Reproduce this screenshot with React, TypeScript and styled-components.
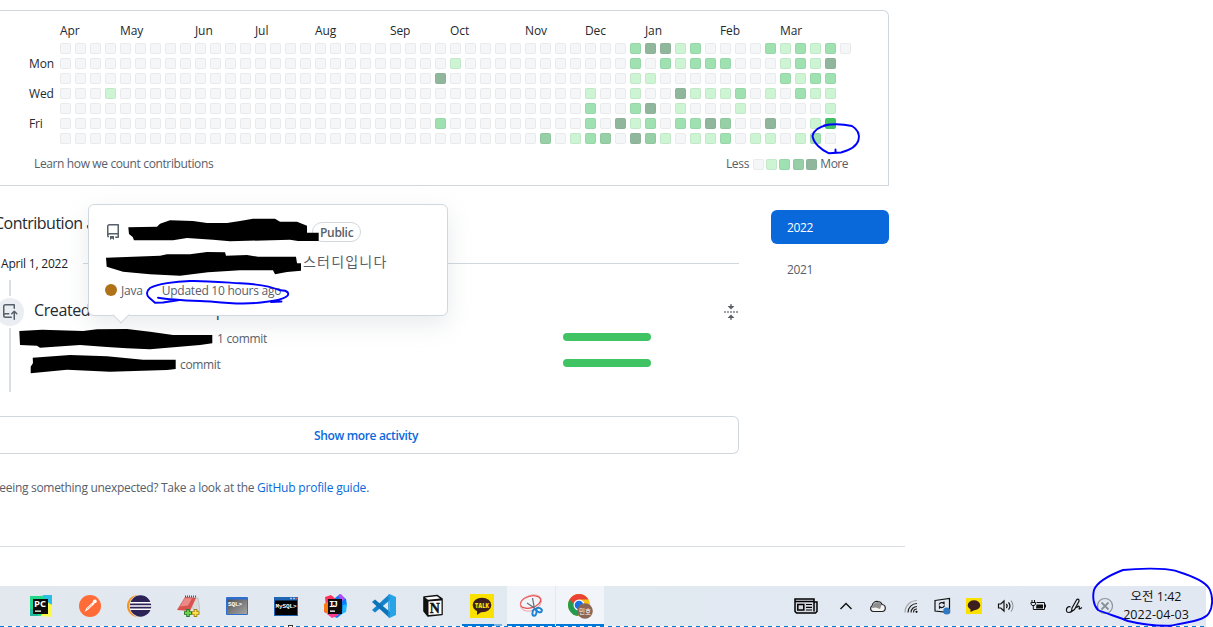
import React from "react";
import styled, { createGlobalStyle } from "styled-components";

const GlobalStyle = createGlobalStyle`
  * { box-sizing: border-box; }
  body { margin: 0; background: #fff; overflow: hidden; }
  #root { font-family: "Open Sans", "Noto Sans CJK KR", sans-serif; }
`;

const Page = styled.div`
  position: relative;
  width: 1213px;
  height: 627px;
  overflow: hidden;
  display: flex;
  flex-direction: column;
  background: #fff;
`;

const Text = styled.span<{ $size?: number; $color?: string; $weight?: number; $track?: number; $line?: number }>`
  display: block;
  white-space: pre;
  font-size: ${(p) => p.$size ?? 12}px;
  line-height: ${(p) => p.$line ?? 18}px;
  color: ${(p) => p.$color ?? "#57606a"};
  font-weight: ${(p) => p.$weight ?? 400};
  letter-spacing: ${(p) => p.$track ?? 0}px;
`;

const CalendarCard = styled.section`
  width: 889px;
  height: 176px;
  margin-top: 10px;
  flex: none;
  border: 1px solid #d0d7de;
  border-left: 0;
  border-radius: 0 6px 0 0;
  padding: 11px 39px 0 29px;
`;

const Months = styled.div`
  display: grid;
  grid-template-columns: repeat(53, 15px);
  height: 21px;
  margin-left: 31px;
`;

const Month = styled(Text)<{ $col: number }>`
  grid-row: 1;
  grid-column: ${(p) => p.$col + 1};
`;

const CalendarBody = styled.div`
  display: flex;
`;

const Weekdays = styled.div`
  width: 31px;
  flex: none;
  padding-top: 12px;
  display: flex;
  flex-direction: column;
  gap: 12px;
`;

const Weeks = styled.div`
  display: grid;
  flex: none;
  grid-template-rows: repeat(7, 11px);
  grid-auto-columns: 11px;
  grid-auto-flow: column;
  gap: 4px;
`;

const levelColors = ["#f5f6f8", "#cdf4d3", "#9fe1b1", "#97d0a6", "#90b69c", "#40c463"];

const Day = styled.i<{ $level: number }>`
  width: 11px;
  height: 11px;
  flex: none;
  border-radius: 2px;
  background: ${(p) => levelColors[p.$level]};
  box-shadow: inset 0 0 0 1px rgba(27, 31, 35, ${(p) => (p.$level > 3 ? 0.03 : 0.055)});
`;

const CalendarFooter = styled.div`
  display: flex;
  justify-content: space-between;
  align-items: center;
  margin: 11px 1px 0 5px;
`;

const Legend = styled.div`
  display: flex;
  align-items: center;
  gap: 3.5px;
`;

const Swatches = styled.div`
  display: flex;
  gap: 2.3px;
`;

const Columns = styled.div`
  display: flex;
  gap: 32px;
  height: 268px;
  flex: none;
`;

const Feed = styled.main`
  width: 739px;
  display: flex;
  flex-direction: column;
`;

const Heading = styled.div`
  height: 54px;
  padding-top: 25px;
  margin-left: -6px;
`;

const DateRow = styled.div`
  display: flex;
  align-items: center;
  gap: 15px;
  height: 47px;
  padding-left: 1px;
  &::after {
    content: "";
    flex: 1;
    height: 1px;
    background: #d0d7de;
  }
`;

const Activity = styled.div`
  display: flex;
  height: 112px;
  margin-top: -7px;
`;

const Rail = styled.div`
  width: 24px;
  display: flex;
  flex-direction: column;
`;

const RailLine = styled.div<{ $height: number }>`
  width: 2px;
  height: ${(p) => p.$height}px;
  margin-left: 9px;
  background: #d8dee4;
`;

const Badge = styled.div`
  width: 28px;
  height: 28px;
  margin: 2px 0 2px -4px;
  border-radius: 50%;
  background: #eaeef2;
  display: grid;
  place-items: center;
`;

const ActivityBody = styled.div`
  flex: 1;
  padding-top: 18px;
`;

const ActivityTitle = styled.div`
  display: flex;
  justify-content: space-between;
  align-items: center;
  height: 28px;
  padding-left: 10px;
  & > span { margin-bottom: 4px; }
`;

const CommitRow = styled.div<{ $indent: number }>`
  display: flex;
  align-items: center;
  justify-content: space-between;
  height: 26px;
  padding-left: ${(p) => p.$indent}px;
  padding-right: 88px;
`;

const CommitBar = styled.div`
  width: 88px;
  height: 8px;
  margin-bottom: 4px;
  border-radius: 4px;
  background: #40c463;
`;

const ShowMore = styled.button`
  height: 38px;
  margin-top: 24px;
  border: 1px solid #d0d7de;
  border-left: 0;
  border-radius: 0 6px 6px 0;
  background: #fff;
  font-family: inherit;
  padding: 2px 6px 0 0;
  display: flex;
  align-items: center;
  justify-content: center;
`;

const Years = styled.nav`
  width: 118px;
  padding-top: 24px;
  display: flex;
  flex-direction: column;
  gap: 8px;
`;

const Year = styled.div<{ $active?: boolean }>`
  height: 34px;
  padding: 9px 16px 7px;
  border-radius: 6px;
  background: ${(p) => (p.$active ? "#0969da" : "transparent")};
`;

const Hint = styled.div`
  display: flex;
  margin: 25px 0 0 -7px;
`;

const Rule = styled.hr`
  width: 905px;
  height: 1px;
  margin: 49px 0 39px;
  border: 0;
  flex: none;
  background: #d8dee4;
`;

const HoverCard = styled.aside`
  position: absolute;
  left: 88px;
  top: 204px;
  width: 360px;
  height: 112px;
  border: 1px solid #d0d7de;
  border-radius: 6px;
  background: #fff;
  box-shadow: 0 8px 24px rgba(140, 149, 159, 0.2);
  padding: 17px 16px;
  &::after {
    content: "";
    position: absolute;
    left: 26px;
    bottom: -6px;
    width: 11px;
    height: 11px;
    background: #fff;
    border: solid #d0d7de;
    border-width: 0 1px 1px 0;
    transform: rotate(45deg);
  }
`;

const RepoLine = styled.div`
  display: flex;
  align-items: center;
  height: 20px;
`;

const Visibility = styled.div`
  margin-left: 191px;
  width: 49px;
  height: 20px;
  border: 1px solid #d0d7de;
  border-radius: 10px;
  display: flex;
  align-items: center;
  padding: 2px 0 0 7px;
`;

const Description = styled.div`
  height: 20px;
  margin: 10px 0 9px;
  padding-left: 198px;
`;

const MetaLine = styled.div`
  display: flex;
  align-items: center;
  height: 18px;
  & > span { padding-top: 2px; }
`;

const LanguageDot = styled.i`
  width: 12px;
  height: 12px;
  margin-right: 4px;
  border-radius: 50%;
  background: #b07219;
`;

const Updated = styled(Text)`
  margin-left: 19px;
`;

const Taskbar = styled.footer`
  position: relative;
  width: 1206px;
  height: 41px;
  flex: none;
  display: flex;
  background: linear-gradient(90deg, #e3e8ef, #e1e9f1 50%, #e2e8f2);
  padding-left: 17px;
`;

const Apps = styled.div`
  display: flex;
  gap: 1px;
  width: 769px;
`;

const AppSlot = styled.div<{ $active?: boolean; $running?: boolean }>`
  position: relative;
  width: 48px;
  height: 40px;
  display: grid;
  place-items: center;
  background: ${(p) => (p.$active ? "#f1f5fa" : "transparent")};
  &::after {
    content: "";
    position: absolute;
    bottom: 0;
    left: ${(p) => (p.$active ? 0 : 4)}px;
    right: ${(p) => (p.$active ? 0 : 4)}px;
    height: 2px;
    background: ${(p) =>
      p.$active ? "#0078d7" : p.$running ? "linear-gradient(90deg,#0078d7 32px,#76b4e8 32px)" : "transparent"};
  }
`;

const Tray = styled.div`
  display: flex;
`;

const TraySlot = styled.div<{ $w: number }>`
  width: ${(p) => p.$w}px;
  height: 40px;
  display: flex;
  align-items: center;
  justify-content: center;
  & > svg { flex: none; }
`;

const Clock = styled.div`
  width: 64px;
  padding-top: 2px;
  display: flex;
  flex-direction: column;
  align-items: center;
`;

const Selection = styled.div`
  position: absolute;
  left: 0;
  bottom: 0;
  width: 1204px;
  height: 1px;
  background: repeating-linear-gradient(90deg, #0078d7 0 4px, #fff 4px 8px);
`;

const SelectionHandle = styled.i`
  position: absolute;
  left: 288px;
  bottom: -3px;
  width: 5px;
  height: 5px;
  border: 1px solid #333;
  background: #fff;
`;

const Ink = styled.svg`
  position: absolute;
  inset: 0;
  pointer-events: none;
`;

const monthLabels: [string, number][] = [
  ["Apr", 0], ["May", 4], ["Jun", 9], ["Jul", 13], ["Aug", 17], ["Sep", 22],
  ["Oct", 26], ["Nov", 31], ["Dec", 35], ["Jan", 39], ["Feb", 44], ["Mar", 48],
];

const empty = (n: number) => "0".repeat(n);
const rows = [
  empty(38) + "244120000212120",
  empty(26) + "1" + empty(11) + "20212220001214",
  empty(25) + "4" + empty(12) + "11000000002122",
  "0001" + empty(31) + "100" + "10041112010211",
  empty(35) + "200" + "24010001000001",
  empty(25) + "2" + empty(9) + "204" + "12022430040015",
  empty(32) + "301230" + "43101120110120",
];

const days: { key: string; level: number }[] = [];
for (let col = 0; col < 53; col++) {
  for (let row = 0; row < 7; row++) {
    if (col === 52 && row > 0) break;
    days.push({ key: `${col}-${row}`, level: Number(rows[row][col]) });
  }
}

const octicons = {
  repo: "M2 2.5A2.5 2.5 0 014.5 0h8.75a.75.75 0 01.75.75v12.5a.75.75 0 01-.75.75h-2.5a.75.75 0 110-1.5h1.75v-2h-8a1 1 0 00-.714 1.7.75.75 0 01-1.072 1.05A2.495 2.495 0 012 11.5v-9zm10.5-1V9h-8c-.356 0-.694.074-1 .208V2.5a1 1 0 011-1h8zM5 12.25v3.25a.25.25 0 00.4.2l1.45-1.087a.25.25 0 01.3 0L8.6 15.7a.25.25 0 00.4-.2v-3.25a.25.25 0 00-.25-.25h-3.5a.25.25 0 00-.25.25z",
  push: "M1 2.5A2.5 2.5 0 013.5 0h8.75a.75.75 0 01.75.75v3.5a.75.75 0 01-1.5 0V1.5h-8a1 1 0 00-1 1v6.708A2.492 2.492 0 013.5 9h3.25a.75.75 0 010 1.5H3.5a1 1 0 100 2h5.75a.75.75 0 010 1.5H3.5A2.5 2.5 0 011 11.5v-9zm13.23 7.79a.75.75 0 001.06-1.06l-2.505-2.505a.75.75 0 00-1.06 0L9.22 9.229a.75.75 0 001.06 1.061l1.225-1.224v6.184a.75.75 0 001.5 0V9.066l1.224 1.224z",
  fold: "M10.896 2H8.75V.75a.75.75 0 00-1.5 0V2H5.104a.25.25 0 00-.177.427l2.896 2.896a.25.25 0 00.354 0l2.896-2.896A.25.25 0 0010.896 2zM8.75 15.25a.75.75 0 01-1.5 0V14H5.104a.25.25 0 01-.177-.427l2.896-2.896a.25.25 0 01.354 0l2.896 2.896a.25.25 0 01-.177.427H8.75v1.25zm-6.5-6.5a.75.75 0 000-1.5h-.5a.75.75 0 000 1.5h.5zM6 8a.75.75 0 01-.75.75h-.5a.75.75 0 010-1.5h.5A.75.75 0 016 8zm2.25.75a.75.75 0 000-1.5h-.5a.75.75 0 000 1.5h.5zM12 8a.75.75 0 01-.75.75h-.5a.75.75 0 010-1.5h.5A.75.75 0 0112 8zm2.25.75a.75.75 0 000-1.5h-.5a.75.75 0 000 1.5h.5z",
};

const Octicon = ({ name }: { name: keyof typeof octicons }) => (
  <svg width="16" height="16" viewBox="0 0 16 16" fill="#57606a"><path fillRule="evenodd" d={octicons[name]} /></svg>
);

const PyCharm = () => (
  <svg width="24" height="24" viewBox="0 0 24 24">
    <path d="M1 2h9l13-1v8L12 22H1z" fill="#21d789" />
    <path d="M14 1h9v10l-6-4z" fill="#2bbde8" />
    <path d="M18 8l5 3v12l-11-1z" fill="#fcf84a" />
    <path d="M1 15h8v7H1z" fill="#22b8a0" />
    <rect x="4" y="5" width="15" height="15" fill="#0b0b0b" />
    <text x="5" y="13" fontSize="9" fontWeight="700" fill="#fff" textLength="12" lengthAdjust="spacingAndGlyphs">PC</text>
    <rect x="6" y="16.5" width="6" height="1.3" fill="#fff" />
  </svg>
);

const Postman = () => (
  <svg width="24" height="24" viewBox="0 0 24 24">
    <circle cx="12" cy="12" r="11" fill="#ff6c37" />
    <path d="M6.500 18l2-4 6.500-6 1.600 1.800L10 15.700z" fill="#fff" />
    <circle cx="16.800" cy="7.300" r="1.900" fill="#fff" />
    <path d="M9 15l5-4.500" stroke="#ff9a74" strokeWidth=".7" />
  </svg>
);

const Eclipse = () => (
  <svg width="26" height="24" viewBox="0 0 26 24">
    <circle cx="12" cy="12" r="11" fill="#f7941e" />
    <circle cx="14.5" cy="12" r="11.3" fill="#e3e8ef" />
    <circle cx="14.5" cy="12" r="10.7" fill="#2c2255" />
    <path d="M4 8.800h21M3.500 12h22M4 15.200h21" stroke="#fff" strokeWidth="1.5" />
  </svg>
);

const NotepadPlus = () => (
  <svg width="24" height="24" viewBox="0 0 24 24">
    <path d="M10 3l12 1 2 12-5 2z" fill="#d9dadb" stroke="#999" strokeWidth=".4" />
    <path d="M9 3l11 1-6 13L1 16z" fill="#d9534f" />
    <path d="M9 4l7 .5-4 7-8 1z" fill="#f3a19b" opacity=".7" />
    <path d="M9 2.500h11" stroke="#555" strokeWidth="2" strokeDasharray="1 1" />
    <path d="M12 15v8M8 19h8" stroke="#267a2b" strokeWidth="3.6" />
    <path d="M12 16v6M9 19h6" stroke="#6fd04c" strokeWidth="1.8" />
    <path d="M19.500 15v8M16 19h7.500" stroke="#a58412" strokeWidth="3.6" />
    <path d="M19.500 16v6M16.500 19h6" stroke="#ffe14a" strokeWidth="1.8" />
  </svg>
);

const SqlConsole = () => (
  <svg width="24" height="24" viewBox="0 0 24 24">
    <defs><linearGradient id="sqlBody" x2="1" y2="1"><stop stopColor="#535353" /><stop offset="1" stopColor="#a5a5a5" /></linearGradient></defs>
    <rect x="1" y="3" width="22" height="18" rx="1" fill="#2d6fd0" />
    <rect x="2" y="5.5" width="20" height="14.5" fill="url(#sqlBody)" />
    <text x="3" y="11.5" fontSize="6" fontFamily="Liberation Mono" fontWeight="700" fill="#fff" textLength="14">SQL&gt;</text>
  </svg>
);

const MySql = () => (
  <svg width="24" height="24" viewBox="0 0 24 24">
    <rect x="0" y="3" width="24" height="19" fill="#2166b4" />
    <path d="M16 4.500h2M19 4.500h2" stroke="#9cc6f4" strokeWidth="1.5" />
    <path d="M21.500 4.500h2" stroke="#e25544" strokeWidth="1.5" />
    <rect x="1" y="6.5" width="22" height="14.5" fill="#000" />
    <text x="1.5" y="13.5" fontSize="6" fontFamily="Liberation Mono" fontWeight="700" fill="#fff" textLength="21">MySQL&gt;</text>
  </svg>
);

const IntelliJ = () => (
  <svg width="24" height="24" viewBox="0 0 24 24">
    <path d="M2 3l6-2 6 5-4 16-9-4 2-6z" fill="#fe315d" />
    <path d="M1 10l5-3v14l-5-4z" fill="#f97a12" />
    <path d="M12 4l5-4 6 5 1 6-5 9-5 4-5-2z" fill="#087cfa" />
    <path d="M15 2l3-2 4 5-3 2z" fill="#b74af7" />
    <path d="M4 20l6-2 6 3-7 3z" fill="#fe3c8d" />
    <path d="M20 11l4-1-1 8-4 2z" fill="#20b8f5" />
    <rect x="5" y="5" width="14" height="15" fill="#110b0b" />
    <text x="6" y="13" fontSize="9" fontFamily="Liberation Mono" fontWeight="700" fill="#fff" textLength="9">IJ</text>
    <rect x="7" y="16.5" width="5" height="1.3" fill="#fff" />
  </svg>
);

const VsCode = () => (
  <svg width="24" height="24" viewBox="0 0 24 24">
    <path d="M17.500 0L24 3v18l-6.500 3z" fill="#28a3e8" />
    <path d="M17.500 0L18 6 3 18.500 0 16z" fill="#1682cc" />
    <path d="M0 8l3-2.500L18 18l-.5 6z" fill="#0c73b8" />
    <path d="M17.500 0v24l-1.300-.8V1z" fill="#2196dc" />
  </svg>
);

const Notion = () => (
  <svg width="24" height="24" viewBox="0 0 24 24">
    <path d="M3 3l13-1.500 5 3.500v15.500l-14 1.500-4-5z" fill="#111" stroke="#111" strokeLinejoin="round" strokeWidth="1.6" />
    <path d="M4 3.500l12-1.300 3 2.300-12 1.200z" fill="#fff" />
    <path d="M7.500 7.500l13-1v13.500l-13 1z" fill="#fff" />
    <text x="8.700" y="19" fontSize="14" fontFamily="Liberation Serif" fontWeight="700" fill="#111" stroke="#111" strokeWidth=".4">N</text>
  </svg>
);

const KakaoTalk = () => (
  <svg width="24" height="24" viewBox="0 0 24 24">
    <rect width="24" height="24" fill="#fae100" />
    <ellipse cx="12" cy="11" rx="9.3" ry="7.3" fill="#3b1e1e" />
    <path d="M7 16v5l5-3.500z" fill="#3b1e1e" />
    <text x="5" y="13.5" fontSize="6.5" fontWeight="800" fill="#fae100" textLength="14" lengthAdjust="spacingAndGlyphs">TALK</text>
  </svg>
);

const SnippingTool = () => (
  <svg width="26" height="24" viewBox="0 0 26 24" fill="none">
    <ellipse cx="12.5" cy="8" rx="10.5" ry="5.8" transform="rotate(-16 12.5 8)" stroke="#e84a4a" strokeWidth="1.3" />
    <ellipse cx="13" cy="9" rx="11" ry="7.5" transform="rotate(-24 13 9)" stroke="#f08b8b" strokeWidth=".7" />
    <path d="M14.500 4l2 11M9 9l9 6" stroke="#67727c" strokeWidth="1.3" />
    <ellipse cx="16.5" cy="18.5" rx="2" ry="3.3" transform="rotate(12 16.5 18.5)" stroke="#1f83d2" strokeWidth="1.9" />
    <ellipse cx="21" cy="16" rx="3" ry="2" transform="rotate(25 21 16)" stroke="#1f83d2" strokeWidth="1.9" />
  </svg>
);

const Chrome = () => (
  <svg width="26" height="26" viewBox="0 0 26 26">
    <circle cx="12" cy="12" r="11" fill="#fbc116" />
    <path d="M2.500 6.500A11 11 0 0011 23l4.500-8L12 12z" fill="#229b52" />
    <path d="M2.500 6.500A11 11 0 0121.500 6.500H12L8 12z" fill="#ea4335" />
    <circle cx="12" cy="12" r="5.5" fill="#fff" />
    <circle cx="12" cy="12" r="4.3" fill="#1a6fe8" />
    <circle cx="18" cy="18" r="7.8" fill="#8a6657" />
    <text x="12" y="20.8" fontSize="7" fill="#fff" textLength="12" lengthAdjust="spacingAndGlyphs">민호</text>
  </svg>
);

const News = () => (
  <svg width="24" height="16" viewBox="0 0 24 16" fill="none" stroke="#000" strokeWidth="1.5">
    <path d="M20 4h3v9.500l-1.500 1.500H2.500L1 13.500V1h19v12.500" fill="#d5d9df" />
    <path d="M1 3.500h19" /><rect x="3.800" y="6.500" width="6" height="5.5" />
    <path d="M12 6.500h6M12 9.300h6M12 12h6" strokeWidth="1.2" />
  </svg>
);
const ChevronUp = () => (
  <svg width="14" height="8" viewBox="0 0 14 8" fill="none" stroke="#111" strokeWidth="1.4"><path d="M1.500 7L7 1.500 12.500 7" /></svg>
);
const Cloud = () => (
  <svg width="18" height="13" viewBox="0 0 18 13">
    <path d="M4 11.500A3 3 0 013 6C3.500 3 6 1 9 1.500c2.500.2 3.500 1.500 4 3 2 .2 3.300 1.500 3.300 3.500S15 11.500 13 11.500z" fill="#f4f4f4" stroke="#222" strokeWidth="1.2" />
    <path d="M3 8C3.500 4 6.500 2 9 2c2 .3 3 1.500 3.500 3L11 9 7 7.500z" fill="#8f8f8f" />
  </svg>
);
const Wifi = () => (
  <svg width="14" height="14" viewBox="0 0 14 14" fill="none" stroke="#222" strokeWidth="1.2">
    <path d="M1 13.500A12 12 0 0113 1.500" stroke="#a5a9ae" />
    <path d="M4 13.500A9 9 0 0113 4.500M7 13.500A6 6 0 0113 7.500M9.500 13.500A3.500 3.500 0 0113 10" />
    <circle cx="12.5" cy="12.8" r="1.1" fill="#111" stroke="none" />
  </svg>
);
const DisplaySync = () => (
  <svg width="18" height="18" viewBox="0 0 18 18" fill="none" stroke="#111" strokeWidth="1.2">
    <path d="M2 3.500L16.500 1.500v14L2 14z" />
    <path d="M6 7.500C7 5.300 9.500 5 11 6.500V4.500M11.500 8.500C10.500 11 8 11 6.500 9.500V11.800" />
    <circle cx="13.7" cy="14" r="3.5" fill="#2f78c4" stroke="none" />
  </svg>
);
const KakaoTray = () => (
  <svg width="16" height="16" viewBox="0 0 16 16">
    <rect width="16" height="16" fill="#fae100" />
    <ellipse cx="8" cy="7.2" rx="6.2" ry="5" fill="#3b1e1e" /><path d="M4.500 10v4l4-2z" fill="#3b1e1e" />
  </svg>
);
const Speaker = () => (
  <svg width="18" height="14" viewBox="0 0 18 14" fill="none" stroke="#111" strokeWidth="1.2">
    <path d="M2.500 5h2.300L8 2v10L4.800 9H2.500z" />
    <path d="M10.300 5a3 3 0 010 4M12.500 3.300a6 6 0 010 7.400" /><path d="M15 1.500a9 9 0 010 11" stroke="#8d9298" />
  </svg>
);
const Battery = () => (
  <svg width="17" height="12" viewBox="0 0 17 12" fill="none" stroke="#111">
    <path d="M6.500 2.500h8v7h-10M15.500 4.500v3" />
    <path d="M6.500 4.500h6.500v4h-7z" fill="#111" stroke="none" />
    <path d="M2 0v2M4.500 0v2" /><path d="M1 2.500h4.500v1.500L4.500 5.500H2L1 4z" fill="#e2e8f2" /><path d="M3.300 6v3.500h2" />
  </svg>
);
const Pen = () => (
  <svg width="18" height="16" viewBox="0 0 18 16" fill="none" stroke="#111" strokeWidth="1.2">
    <path d="M7 10l4.500-8c1.300-1.600 3-.5 2.500 1.300L9.500 11.500 6.500 13.500z" />
    <path d="M5.500 8.800C2.500 8.300 1 10.500 1.500 12.800s3.500 2.200 5.500.2M11.500 10c.8-1.500 2.300-2.300 2.800-1.300s-1 2.500.5 2.300L17 9.500" />
  </svg>
);
const CloseCircle = () => (
  <svg width="18" height="18" viewBox="0 0 18 18" fill="none" stroke="#8b9096" strokeWidth="1.2">
    <circle cx="9" cy="9" r="7.5" /><path d="M5.500 5.500l7 7M12.500 5.500l-7 7" strokeWidth="1.8" />
  </svg>
);

const apps: { icon: React.FC; active?: boolean; running?: boolean }[] = [
  { icon: PyCharm }, { icon: Postman }, { icon: Eclipse }, { icon: NotepadPlus }, { icon: SqlConsole },
  { icon: MySql }, { icon: IntelliJ }, { icon: VsCode }, { icon: Notion }, { icon: KakaoTalk, running: true },
  { icon: SnippingTool, active: true }, { icon: Chrome, active: true },
];

const tray: [React.FC, number][] = [
  [News, 40], [ChevronUp, 40], [Cloud, 24], [Wifi, 42], [DisplaySync, 20],
  [KakaoTray, 44], [Speaker, 18], [Battery, 48], [Pen, 24], [CloseCircle, 38],
];

export default function App() {
  return (
    <Page>
      <GlobalStyle />
      <CalendarCard>
        <Months>
          {monthLabels.map(([name, col]) => (
            <Month key={name} $col={col} $color="#24292f" $track={-0.1}>{name}</Month>
          ))}
        </Months>
        <CalendarBody>
          <Weekdays>
            {["Mon", "Wed", "Fri"].map((d) => (
              <Text key={d} $color="#24292f" $track={-0.15}>{d}</Text>
            ))}
          </Weekdays>
          <Weeks>
            {days.map((d) => <Day key={d.key} $level={d.level} />)}
          </Weeks>
        </CalendarBody>
        <CalendarFooter>
          <Text $track={-0.37}>Learn how we count contributions</Text>
          <Legend>
            <Text $track={-0.3}>Less</Text>
            <Swatches>
              {[0, 1, 2, 3, 4].map((l) => <Day key={l} $level={l} />)}
            </Swatches>
            <Text $track={-0.5}>More</Text>
          </Legend>
        </CalendarFooter>
      </CalendarCard>

      <Columns>
        <Feed>
          <Heading><Text $size={16} $line={24} $color="#24292f" $track={-0.5}>Contribution activity</Text></Heading>
          <DateRow><Text $weight={500} $color="#1b2026" $track={-0.2}>April 1, 2022</Text></DateRow>
          <Activity>
            <Rail>
              <RailLine $height={16} />
              <Badge><Octicon name="push" /></Badge>
              <RailLine $height={64} />
            </Rail>
            <ActivityBody>
              <ActivityTitle>
                <Text $size={16} $line={24} $color="#24292f" $track={-0.4}>Created 2 commits in 2 repositories</Text>
                <Octicon name="fold" />
              </ActivityTitle>
              <CommitRow $indent={193}><Text $track={-0.3}>1 commit</Text><CommitBar /></CommitRow>
              <CommitRow $indent={156}><Text $track={-0.35}>commit</Text><CommitBar /></CommitRow>
            </ActivityBody>
          </Activity>
          <ShowMore><Text $weight={600} $color="#0969da" $track={-0.35}>Show more activity</Text></ShowMore>
        </Feed>
        <Years>
          <Year $active><Text $color="#fff" $track={-0.4}>2022</Text></Year>
          <Year><Text $track={-0.4}>2021</Text></Year>
        </Years>
      </Columns>

      <Hint>
        <Text $track={-0.3}>Seeing something unexpected? Take a look at the </Text>
        <Text $track={-0.2} $color="#0969da">GitHub profile guide</Text>
        <Text>.</Text>
      </Hint>
      <Rule />

      <Taskbar>
        <Apps>
          {apps.map(({ icon: Icon, active, running }, i) => (
            <AppSlot key={i} $active={active} $running={running}><Icon /></AppSlot>
          ))}
        </Apps>
        <Tray>
          {tray.map(([Icon, w], i) => <TraySlot key={i} $w={w}><Icon /></TraySlot>)}
          <Clock>
            <Text $size={12.5} $color="#111" $track={0}>오전 1:42</Text>
            <Text $size={12.5} $color="#111" $track={0.05}>2022-04-03</Text>
          </Clock>
        </Tray>
        <Selection />
        <SelectionHandle />
      </Taskbar>

      <HoverCard>
        <RepoLine>
          <Octicon name="repo" />
          <Visibility><Text $weight={600} $track={-0.3}>Public</Text></Visibility>
        </RepoLine>
        <Description><Text $size={14} $line={20} $track={1.2}>스터디입니다</Text></Description>
        <MetaLine>
          <LanguageDot />
          <Text $track={-0.2}>Java</Text>
          <Updated $track={-0.25}>Updated 10 hours ago</Updated>
        </MetaLine>
      </HoverCard>

      <Ink width="1213" height="627" viewBox="0 0 1213 627">
        <g fill="#000">
          <path d="M128.300 227.300L157 226.700 160 223.700 170 220.300 193 221 207 223H227L240 221 253 218.700H275L280 221.700H297L307 225.700V232.700H318.700V241H298L290 239.700 230 241.300 213 239.700 187 238 173 240.300H134L132.700 237 129 234z" />
          <path d="M106 257.700L160 255.700 167 254.300H190L207 252 225 252.300 226 255.700 247 255 258 256.700H296L297 263.300H301V270.700L287 272 275 274.300 273 270.300H240L208 272.300 180 275.700 150 274.300 123 271.700 106.700 266.700z" />
          <path d="M19.300 331L42 329.700 83 331 97 329.300 127 329 150 331.700 173 335H212.300V343.300L200 345 150 349.300 127 348.300 107 347 80 345 40 347.700 37 345.700 20 345z" />
          <path d="M32.700 357.700L70 355 107 356.300 143 359.700H175.700V369L167 370 110 371.700 67 369.700 30.700 373.300V366.700L33 363z" />
        </g>
        <g fill="none" stroke="#0000ff" strokeWidth="1.9" strokeLinecap="round" strokeLinejoin="round">
          <path d="M824 125.500C833 123.600 843 124 852 126C857 129 860 134 858.500 140C857 146 850 150 841 152.500L829 153.300C821 150 813.500 143 812.500 136C814 129 820 126.500 828 124.800M835.500 149.500V153" />
          <path d="M158 297.700C174 300.300 195 300.700 213 301.700C230 303.500 250 304 263 302.300C273 301 288 299 288.300 294C288 290 284 291 279 290C270 286 255 284 240 283.300C220 282 202 280.500 190 281C175 281.300 157 284 150 288C146.500 291 146 295 149 297.500L155 302.700 163 302.500 178 300.300M271 302L281.500 301.500" />
          <path d="M1123 570C1135 568.700 1163 567.500 1175 570.700L1185 574C1195 577.500 1207 583 1210 590C1213 597 1213 607 1209 613C1205 620 1190 622 1170 625.700C1155 626 1140 624 1128 621C1118 617 1105 613 1098 610C1093 605 1092.500 596 1094 590C1097 582 1110 575 1123 570" />
        </g>
      </Ink>
    </Page>
  );
}
